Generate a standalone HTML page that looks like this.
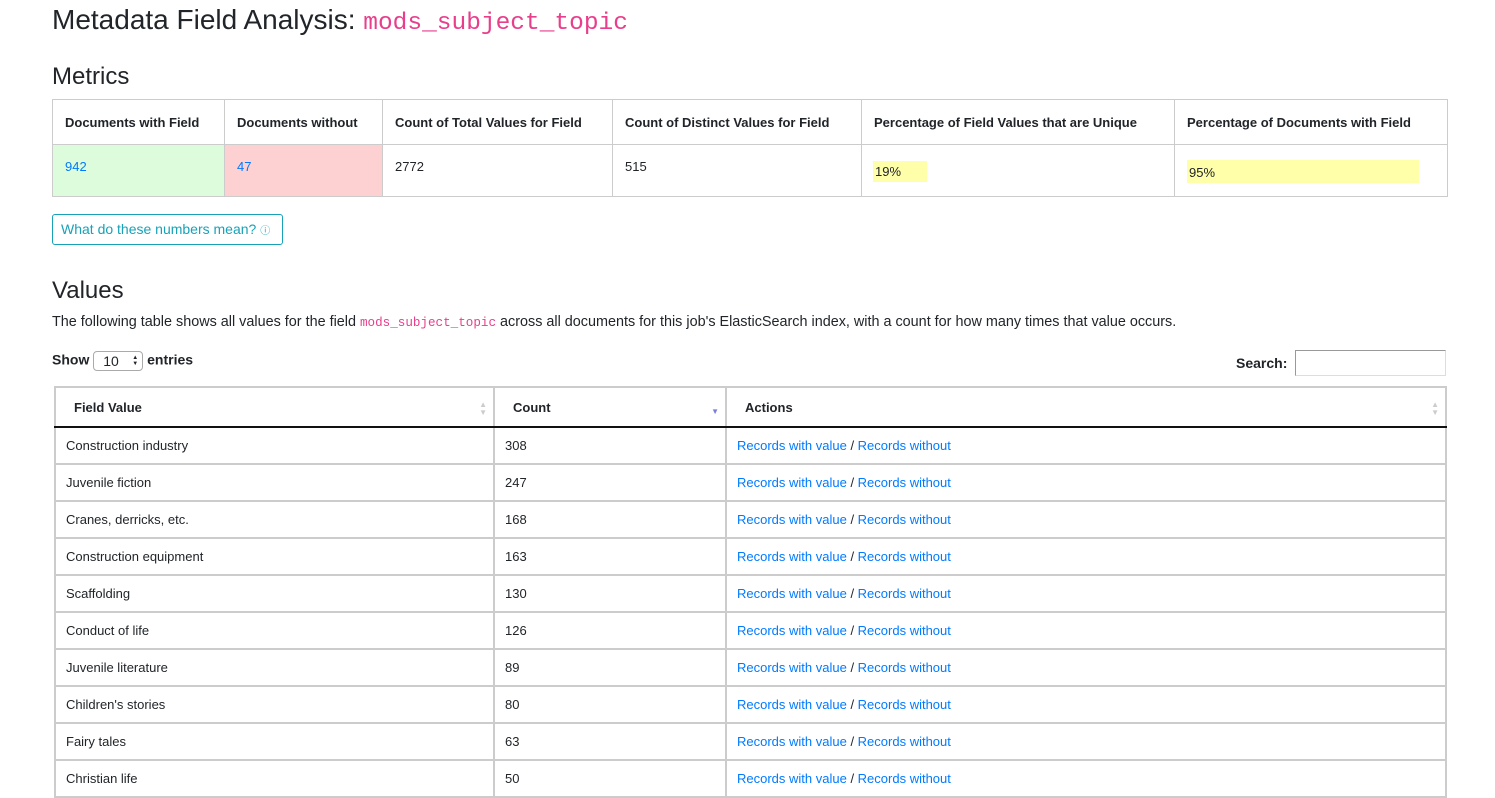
<!DOCTYPE html>
<html><head><meta charset="utf-8"><style>
body{margin:0;background:#fff;font-family:"Liberation Sans",Arial,sans-serif;color:#212529;width:1495px;height:797px;overflow:hidden;position:relative}
.a{position:absolute}
h1{position:absolute;left:52px;top:4px;margin:0;font-size:28px;font-weight:400}
h1 code{font-family:"Liberation Mono",monospace;color:#e83e8c;font-size:24.5px}
h2{position:absolute;margin:0;font-size:24px;font-weight:400;left:52px}
table{border-collapse:collapse;position:absolute;table-layout:fixed}
.m{left:52px;top:99px;width:1395px;font-size:13px}
.m td{border:1px solid #ccc;padding:0 12px;vertical-align:top}
.m tr.h td{height:44px;font-weight:bold;vertical-align:middle}
.m tr.b td{height:52px;padding-top:14px;box-sizing:border-box}
a{color:#007bff;text-decoration:none}
.hl{background:#ffffaa;display:inline-block;padding:3px 2px;margin-top:2px}
.btn{left:52px;top:214px;border:1px solid #17a2b8;border-radius:3px;color:#17a2b8;font-size:14px;line-height:29px;padding-left:8px;box-sizing:border-box;width:231px;height:31px}
.v{left:54px;top:386px;width:1391px;font-size:13px}
.v td,.v th{border:2px solid #ccc;padding:0 10px;text-align:left;height:35px}
.v th{height:38px;border-bottom:2px solid #111;padding-left:18px;position:relative}
.s{position:absolute;right:6px;top:13px;font-size:8px;line-height:8px;color:#ccc}
</style></head><body>
<h1>Metadata Field Analysis: <code>mods_subject_topic</code></h1>
<h2 style="top:63px">Metrics</h2>
<table class="m">
<colgroup><col style="width:172px"><col style="width:158px"><col style="width:230px"><col style="width:249px"><col style="width:313px"><col style="width:273px"></colgroup>
<tr class="h"><td>Documents with Field</td><td>Documents without</td><td>Count of Total Values for Field</td><td>Count of Distinct Values for Field</td><td>Percentage of Field Values that are Unique</td><td>Percentage of Documents with Field</td></tr>
<tr class="b"><td style="background:#dcfcdc"><a>942</a></td><td style="background:#fdd0d1"><a>47</a></td><td>2772</td><td>515</td><td><span class="hl" style="width:50px;margin-left:-1px">19%</span></td><td><span class="hl" style="width:228px;margin-top:1px;padding:5px 2px 3px">95%</span></td></tr>
</table>
<div class="a btn">What do these numbers mean? <span style="font-size:10px">&#9432;</span></div>
<h2 style="top:277px">Values</h2>
<div class="a" style="left:52px;top:314px;font-size:14.4px;white-space:nowrap">The following table shows all values for the field <code style="font-family:'Liberation Mono',monospace;color:#e83e8c;font-size:12.6px">mods_subject_topic</code> across all documents for this job's ElasticSearch index, with a count for how many times that value occurs.</div>
<div class="a" style="left:52px;top:351px;font-size:14px;font-weight:bold;white-space:nowrap">Show <span style="display:inline-block;border:1px solid #aaa;border-radius:4px;width:50px;height:20px;font-weight:normal;vertical-align:middle;line-height:19px;padding-left:9px;box-sizing:border-box;font-size:14px;position:relative">10<span style="position:absolute;right:4px;top:3px;font-size:6px;line-height:6px">&#9650;<br>&#9660;</span></span> entries</div>
<div class="a" style="left:1236px;top:355px;font-size:14px;font-weight:bold">Search:</div>
<div class="a" style="left:1295px;top:350px;width:151px;height:26px;border:1px solid #999;border-right-color:#ddd;border-bottom-color:#ddd;box-sizing:border-box"></div>
<table class="v">
<colgroup><col style="width:439px"><col style="width:232px"><col style="width:720px"></colgroup>
<tr><th>Field Value<span class="s">&#9650;<br>&#9660;</span></th><th>Count<span class="s" style="top:20px;color:#7b7fd8">&#9660;</span></th><th>Actions<span class="s">&#9650;<br>&#9660;</span></th></tr>
<tr><td>Construction industry</td><td>308</td><td><a>Records with value</a> / <a>Records without</a></td></tr>
<tr><td>Juvenile fiction</td><td>247</td><td><a>Records with value</a> / <a>Records without</a></td></tr>
<tr><td>Cranes, derricks, etc.</td><td>168</td><td><a>Records with value</a> / <a>Records without</a></td></tr>
<tr><td>Construction equipment</td><td>163</td><td><a>Records with value</a> / <a>Records without</a></td></tr>
<tr><td>Scaffolding</td><td>130</td><td><a>Records with value</a> / <a>Records without</a></td></tr>
<tr><td>Conduct of life</td><td>126</td><td><a>Records with value</a> / <a>Records without</a></td></tr>
<tr><td>Juvenile literature</td><td>89</td><td><a>Records with value</a> / <a>Records without</a></td></tr>
<tr><td>Children's stories</td><td>80</td><td><a>Records with value</a> / <a>Records without</a></td></tr>
<tr><td>Fairy tales</td><td>63</td><td><a>Records with value</a> / <a>Records without</a></td></tr>
<tr><td>Christian life</td><td>50</td><td><a>Records with value</a> / <a>Records without</a></td></tr>
</table>
</body></html>
